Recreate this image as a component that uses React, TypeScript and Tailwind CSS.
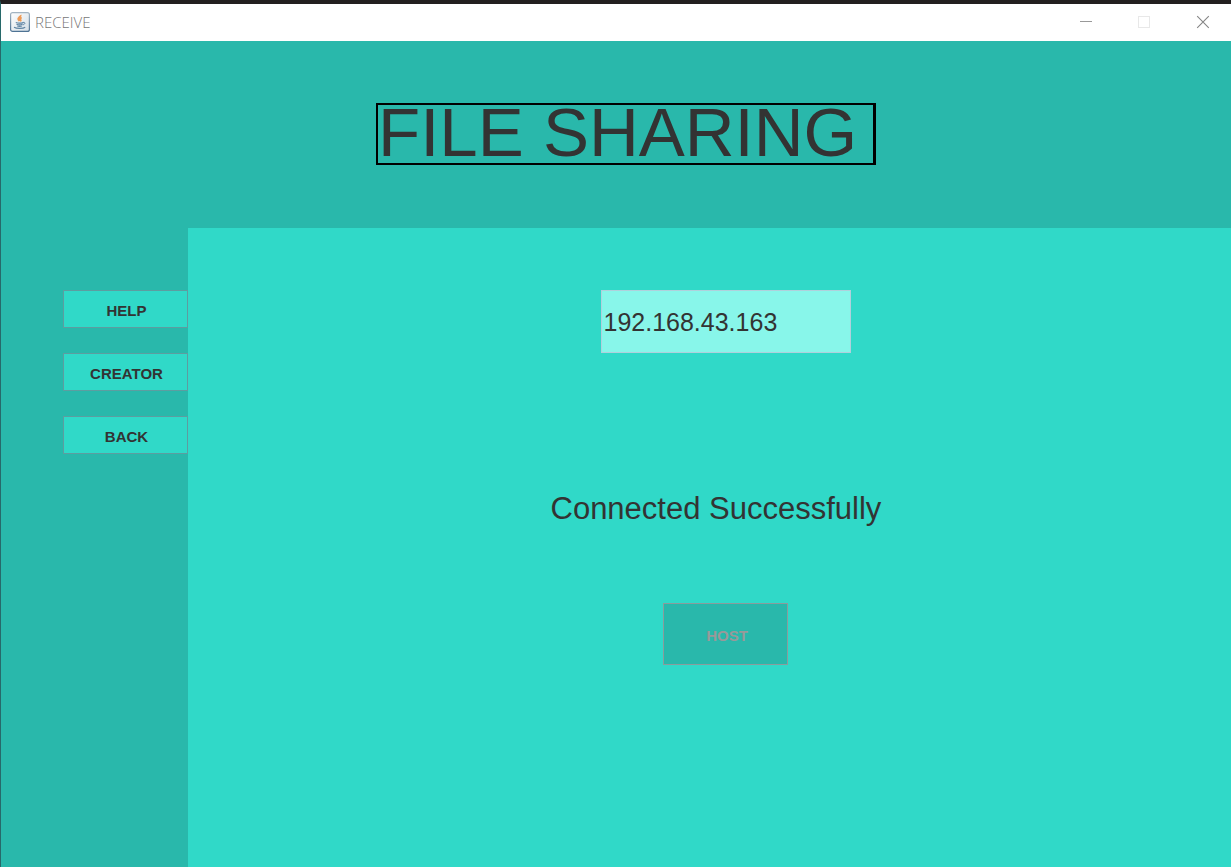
import { useState } from "react";

function JavaIcon() {
  return (
    <svg width="20" height="20" viewBox="0 0 20 20" aria-hidden="true">
      <defs>
        <linearGradient id="frame" x1="0" y1="0" x2="0" y2="1">
          <stop offset="0" stopColor="#a3b4c2" />
          <stop offset="1" stopColor="#4e7394" />
        </linearGradient>
        <linearGradient id="face" x1="0" y1="0" x2="1" y2="1">
          <stop offset="0" stopColor="#ffffff" />
          <stop offset="1" stopColor="#d3dde5" />
        </linearGradient>
      </defs>
      <rect x="0.6" y="0.6" width="18.8" height="18.8" rx="2" fill="url(#face)" stroke="url(#frame)" strokeWidth="1.2" />
      <path d="M10.6 3c.9 1.500-3.300 2.600-2.300 4.400.3.600.9 1 1.200 1.700M11.700 5.500c-1.700.8-1.900 1.500-1.200 2.300.5.600.3 1-.3 1.400" fill="none" stroke="#ee9a55" strokeWidth="1.900" />
      <path d="M5.800 10.600c1.900.6 5.300.6 7.400 0M6.500 12.300c1.600.6 4.500.6 6 0M7.200 13.900c1.400.5 3.500.5 4.700 0M4 15.200c2.500 1.500 9.200 1.500 11.200 0" fill="none" stroke="#5f84a3" strokeWidth="1.100" />
      <path d="M13 10.400c2.600-.6 2.600 2-.4 2.500" fill="none" stroke="#5f84a3" />
    </svg>
  );
}

function TitleBar() {
  return (
    <div className="flex h-[37px] items-center bg-white pb-[2px] pl-[9px] pr-[21px]">
      <JavaIcon />
      <span className="ml-[5px] font-['Open_Sans',sans-serif] text-[15px] leading-5 font-light text-[#777777]">RECEIVE</span>
      <div className="ml-auto flex items-center gap-[46px]">
        <button type="button" aria-label="Minimize" className="block">
          <svg width="12" height="12" viewBox="0 0 12 12" className="block">
            <path d="M0 5.500h12" stroke="#999999" />
          </svg>
        </button>
        <button type="button" aria-label="Maximize" disabled className="block">
          <svg width="12" height="12" viewBox="0 0 12 12" className="block">
            <rect x="0.5" y="0.5" width="11" height="11" fill="none" stroke="#e8e8e8" />
          </svg>
        </button>
        <button type="button" aria-label="Close" className="block">
          <svg width="14" height="14" viewBox="0 0 14 14" className="block">
            <path d="M1.200 1.200l11.600 11.600M12.800 1.200L1.200 12.800" stroke="#858585" strokeWidth="1.100" />
          </svg>
        </button>
      </div>
    </div>
  );
}

function MenuButton({ label }: { label: string }) {
  return (
    <button
      type="button"
      className="flex h-[38px] w-[125px] items-center justify-center border border-[#5d9da0] bg-[#30d9c8] pt-[3px] pl-[2px] text-[15px] leading-5 font-bold text-[#333333]"
    >
      {label}
    </button>
  );
}

export default function App() {
  const [address, setAddress] = useState("192.168.43.163");
  return (
    <div className="flex min-h-screen flex-col border-t-4 border-l border-t-[#231f20] border-l-[#27696a] bg-[#29b8ab] font-['Liberation_Sans',Arial,sans-serif] text-[#333333]">
      <TitleBar />
      <header className="flex h-[187px] items-center justify-center pb-[2px] pl-5">
        <h1 className="flex h-[62px] w-[500px] items-center border-2 border-r-3 border-black pb-[2px] text-[69px] leading-none whitespace-nowrap">
          FILE SHARING
        </h1>
      </header>
      <div className="flex flex-1">
        <nav className="flex w-[187px] shrink-0 flex-col items-end gap-[25px] pt-[62px]">
          <MenuButton label="HELP" />
          <MenuButton label="CREATOR" />
          <MenuButton label="BACK" />
        </nav>
        <main className="flex flex-1 flex-col items-center bg-[#30d9c8] pt-[62px] pl-8">
          <input
            type="text"
            aria-label="Host address"
            value={address}
            onChange={(e) => setAddress(e.target.value)}
            className="h-[63px] w-[250px] border border-[#b0d0dc] bg-[#88f6ea] px-[2px] pt-[1px] text-[25px] text-[#333333] outline-none"
          />
          <p className="mt-[138px] w-[350px] text-[31px] leading-9">Connected Successfully</p>
          <button
            type="button"
            disabled
            className="mt-[76px] flex h-[62px] w-[125px] items-center justify-center border border-[#8a9c9c] bg-[#29b8ab] pt-[3px] pl-[3px] text-[15px] leading-5 font-bold text-[#999999]"
          >
            HOST
          </button>
        </main>
      </div>
    </div>
  );
}
